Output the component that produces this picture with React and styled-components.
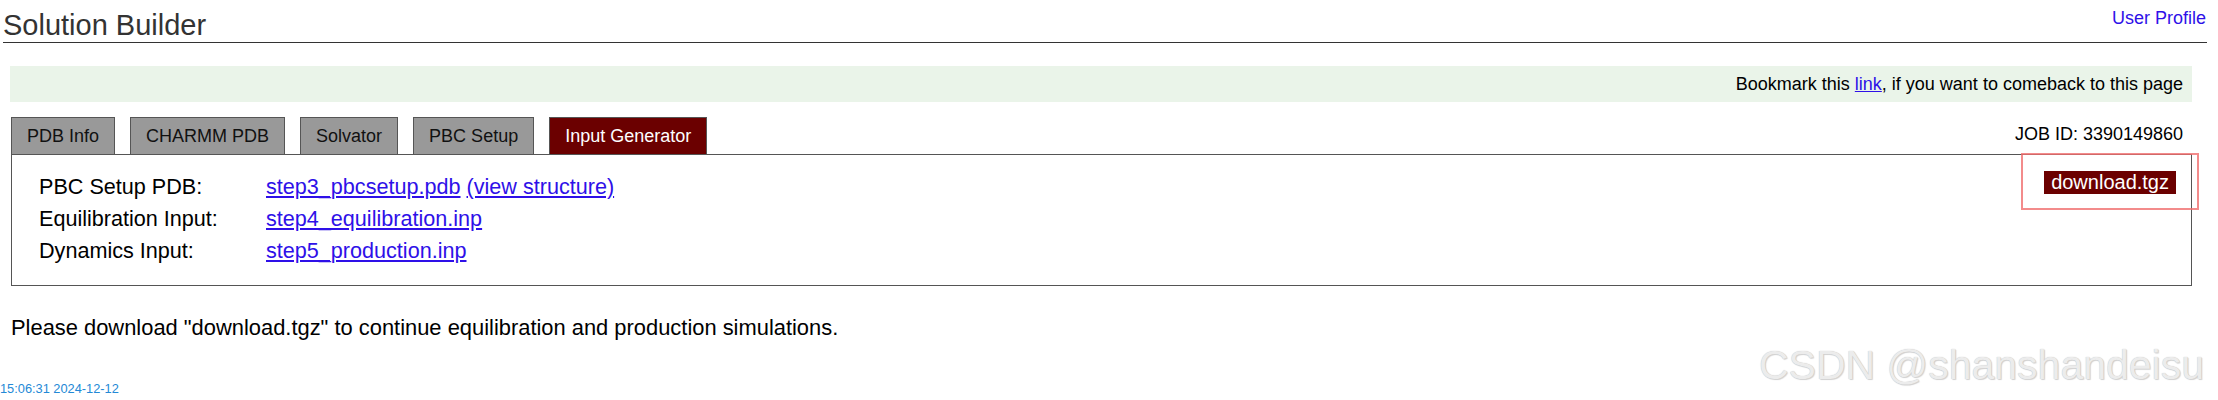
import React from 'react'
import styled, { createGlobalStyle } from "styled-components";

const GlobalStyle = createGlobalStyle`
    body {
        margin: 0;
        background: #fff;
        font-family: "Liberation Sans", Arial, sans-serif;
        color: #000;
    }
`

const rows = [
    { label: 'PBC Setup PDB:', file: 'step3_pbcsetup.pdb', extra: '(view structure)' },
    { label: 'Equilibration Input:', file: 'step4_equilibration.inp' },
    { label: 'Dynamics Input:', file: 'step5_production.inp' },
]

const tabs = ['PDB Info', 'CHARMM PDB', 'Solvator', 'PBC Setup', 'Input Generator']

function App() {
    return (
        <Page>
            <GlobalStyle />
            <Header>
                <Title>Solution Builder</Title>
                <ProfileLink href="#">User Profile</ProfileLink>
            </Header>

            <Content>
                <Notice>
                    Bookmark this <Link href="#">link</Link>, if you want to comeback to this page
                </Notice>

                <TabBar>
                    <Tabs>
                        {tabs.map((t) => (
                            <Tab key={t} $active={t === 'Input Generator'}>{t}</Tab>
                        ))}
                    </Tabs>
                    <JobId>JOB ID: 3390149860</JobId>
                </TabBar>

                <Panel>
                    <FileGrid>
                        {rows.map((r) => (
                            <React.Fragment key={r.label}>
                                <Label>{r.label}</Label>
                                <Value>
                                    <Link href="#">{r.file}</Link>
                                    {r.extra && <> <Link href="#">{r.extra}</Link></>}
                                </Value>
                            </React.Fragment>
                        ))}
                    </FileGrid>
                    <DownloadButton href="#">download.tgz</DownloadButton>
                </Panel>

                <Message>
                    Please download "download.tgz" to continue equilibration and production simulations.
                </Message>
            </Content>

            <Stamp>15:06:31 2024-12-12</Stamp>

            <Highlight />
            <Watermark>CSDN @shanshandeisu</Watermark>
        </Page>
    )
}

export default App


const Page = styled.div`
    position: relative;
    width: 2218px;
    height: 400px;
    padding-top: 8px;
    box-sizing: border-box;
    overflow: hidden;
`

const Header = styled.div`
    display: flex;
    justify-content: space-between;
    align-items: flex-start;
    margin: 0 11px 0 3px;
    border-bottom: 1px solid #333;
    height: 34px;
`

const Title = styled.h1`
    margin: 0;
    font-size: 29px;
    line-height: 34px;
    font-weight: normal;
    color: #333;
`

const Link = styled.a`
    color: #2e10e8;
    text-decoration: underline;
`

const ProfileLink = styled.a`
    color: #2e10e8;
    text-decoration: none;
    font-size: 18px;
    line-height: 21px;
    margin-right: 1px;
`

const Content = styled.div`
    margin: 23px 26px 0 11px;
`

const Notice = styled.div`
    background: #eaf4e9;
    height: 36px;
    line-height: 36px;
    font-size: 18px;
    text-align: right;
    padding-right: 9px;
    margin-left: -1px;
`

const TabBar = styled.div`
    display: flex;
    justify-content: space-between;
    align-items: flex-end;
    margin-top: 15px;
`

const Tabs = styled.div`
    display: flex;
    gap: 15px;
`

const Tab = styled.div`
    height: 36px;
    line-height: 36px;
    padding: 0 15px;
    border: 1px solid #555;
    border-bottom: none;
    font-size: 18px;
    background: ${(p) => (p.$active ? '#6b0000' : '#999')};
    color: ${(p) => (p.$active ? '#fff' : '#111')};
`

const JobId = styled.div`
    font-size: 18px;
    line-height: 20px;
    margin: 0 9px 10px 0;
`

const Panel = styled.div`
    display: flex;
    justify-content: space-between;
    align-items: flex-start;
    border: 1px solid #555;
    padding: 16px 15px 18px 27px;
`

const FileGrid = styled.div`
    display: grid;
    grid-template-columns: 227px auto;
    font-size: 21.6px;
    line-height: 32px;
`

const Label = styled.div``

const Value = styled.div``

const DownloadButton = styled.a`
    background: #6b0000;
    color: #fff;
    text-decoration: none;
    font-size: 20px;
    line-height: 23px;
    padding: 0 7px;
`

const Message = styled.p`
    margin: 30px 0 0;
    font-size: 21.9px;
    line-height: 24.5px;
`

const Stamp = styled.div`
    margin-top: 40px;
    font-size: 12.8px;
    color: #2389d6;
`

const Highlight = styled.div`
    position: absolute;
    left: 2021px;
    top: 153px;
    width: 178px;
    height: 57px;
    box-sizing: border-box;
    border: 2px solid rgba(240, 110, 110, 0.8);
`

const Watermark = styled.div`
    position: absolute;
    left: 1759px;
    top: 345px;
    font-size: 41px;
    line-height: 41px;
    color: #ececec;
    text-shadow: 0 0 1px #b8b8b8, 1px 1px 1px #d4d4d4;
    white-space: nowrap;
`
